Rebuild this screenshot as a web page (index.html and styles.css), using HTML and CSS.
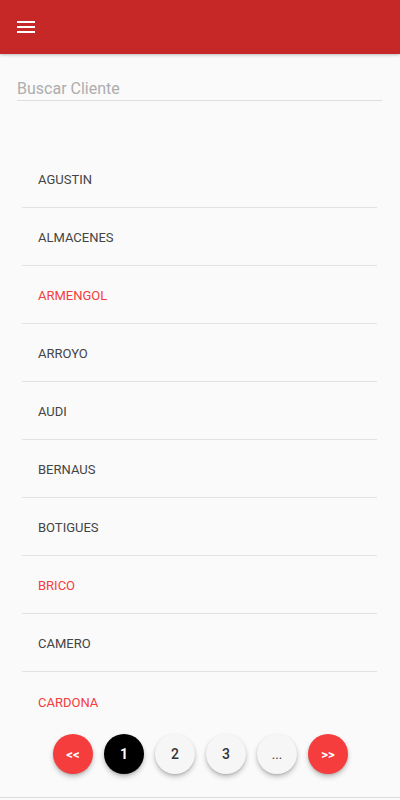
FILE: index.html
```html
<!DOCTYPE html>
<html lang="es">
<head>
<meta charset="utf-8">
<title>Clientes</title>
<link rel="stylesheet" href="styles.css">
</head>
<body>
<div class="app">
  <header class="toolbar">
    <button class="menu-btn" aria-label="Menú">
      <svg width="18" height="14" viewBox="0 0 18 14"><rect x="0" y="1" width="18" height="2" fill="#fff"/><rect x="0" y="6" width="18" height="2" fill="#fff"/><rect x="0" y="11" width="18" height="2" fill="#fff"/></svg>
    </button>
  </header>
  <div class="search">
    <input class="search-input" type="text" placeholder="Buscar Cliente">
  </div>
  <ul class="list">
    <li class="item">AGUSTIN</li>
    <li class="item">ALMACENES</li>
    <li class="item danger">ARMENGOL</li>
    <li class="item">ARROYO</li>
    <li class="item">AUDI</li>
    <li class="item">BERNAUS</li>
    <li class="item">BOTIGUES</li>
    <li class="item danger">BRICO</li>
    <li class="item">CAMERO</li>
    <li class="item danger">CARDONA</li>
  </ul>
  <nav class="pager">
    <button class="page red">&lt;&lt;</button>
    <button class="page dark">1</button>
    <button class="page light">2</button>
    <button class="page light">3</button>
    <button class="page light dots">...</button>
    <button class="page red">&gt;&gt;</button>
  </nav>
  <footer class="footer"></footer>
</div>
</body>
</html>
```
FILE: styles.css
```css
* { box-sizing: border-box; }
html, body { margin: 0; padding: 0; }
body {
  background: #fafafa;
  font-family: Roboto, "Noto Sans", "Liberation Sans", sans-serif;
  height: 800px;
  overflow: hidden;
}
.app {
  display: flex;
  flex-direction: column;
  height: 800px;
}
.toolbar {
  height: 54px;
  background: #c62828;
  box-shadow: 0 1px 3px rgba(0,0,0,0.25);
  display: flex;
  align-items: flex-start;
  padding: 20px 0 0 17px;
  flex: none;
}
.menu-btn {
  background: none;
  border: 0;
  padding: 0;
  margin: 0;
  width: 18px;
  height: 14px;
  display: block;
}
.menu-btn svg { display: block; }
.search {
  padding: 23px 18px 0 17px;
  flex: none;
}
.search-input {
  display: block;
  width: 100%;
  height: 24px;
  line-height: 23px;
  border: 0;
  border-bottom: 1px solid #dedede;
  background: transparent;
  padding: 0;
  margin: 0;
  font-family: Roboto, "Noto Sans", "Liberation Sans", sans-serif;
  font-size: 16px;
  color: #333;
  outline: none;
}
.search-input::placeholder { color: #adadad; }
.list {
  list-style: none;
  margin: 49px 23px 0 22px;
  padding: 0;
  flex: none;
}
.item {
  height: 58px;
  border-bottom: 1px solid #e2e2e2;
  padding-left: 16px;
  display: flex;
  align-items: center;
  padding-top: 2px;
  font-size: 13px;
  color: #444;
}
.item:last-child { border-bottom: 0; }
.item.danger { color: #f53d3d; }
.pager {
  display: flex;
  justify-content: center;
  gap: 11px;
  padding-top: 4px;
  padding-left: 1px;
  flex: none;
}
.page {
  width: 40px;
  height: 40px;
  border-radius: 50%;
  border: 0;
  padding: 0;
  font-family: Roboto, "Noto Sans", "Liberation Sans", sans-serif;
  font-size: 14px;
  font-weight: 500;
  box-shadow: 0 3px 5px rgba(0,0,0,0.22), 0 1px 2px rgba(0,0,0,0.12);
  display: flex;
  align-items: center;
  justify-content: center;
}
.page.red { background: #f53d3d; color: #fff; font-weight: 700; font-size: 13px; }
.page.dark { background: #000; color: #fff; font-weight: 700; }
.page.light { background: #f6f6f6; color: #333; }
.page.dots { font-size: 13px; font-weight: 400; }
.footer {
  margin-top: auto;
  height: 3px;
  border-top: 1px solid #dcdcdc;
  flex: none;
}
```
